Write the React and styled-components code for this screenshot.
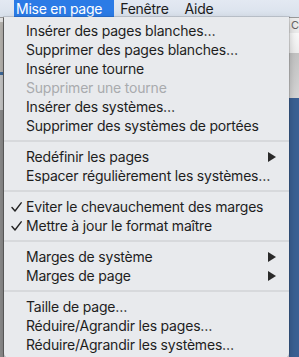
import React from "react";
import styled, { createGlobalStyle } from "styled-components";

const GlobalStyle = createGlobalStyle`
  html, body { margin: 0; padding: 0; background: #3c6294; }
  body { overflow: hidden; font-family: Inter, "Noto Sans", "Liberation Sans", sans-serif; -webkit-font-smoothing: antialiased; }
`;

const Screen = styled.div`
  position: relative;
  width: 299px;
  height: 357px;
  overflow: hidden;
  display: grid;
  grid-template-rows: 17px 1fr;
`;

const MenuBar = styled.div`
  display: flex;
  align-items: stretch;
  gap: 4px;
  padding-left: 14px;
  background: linear-gradient(#e3e9f2, #d9e1ec);
`;

const MenuTitle = styled.div`
  display: flex;
  align-items: center;
  padding: 0 ${(p) => (p.$active ? "12px" : "10px")} 0 2px;
  font-size: 14px;
  letter-spacing: -0.25px;
  color: ${(p) => (p.$active ? "#ffffff" : "#1c1c1c")};
  background: ${(p) => (p.$active ? "#2b7be6" : "transparent")};
`;

const Desktop = styled.div`
  display: grid;
  grid-template-columns: 4px 1fr 10px;
  border-top: 1px solid #9a9a9a;
`;

const LeftEdge = styled.div`
  background: linear-gradient(
    #e4e4e4 0px, #e4e4e4 4px,
    #b9b6b1 4px, #b9b6b1 54px,
    #3e6a9c 54px, #3e6a9c 57px,
    #c9c9c9 57px, #c9c9c9 92px,
    #8d8d8d 92px
  );
  border-right: 1px solid #6f6f6f;
`;

const Middle = styled.div`
  background: #e9ebee;
`;

const RightEdge = styled.div`
  display: grid;
  grid-template-rows: 15px 20px 45px 1fr;
`;

const ToolStrip = styled.div`
  background: #ececec;
  font-size: 11px;
  color: #666;
  padding-left: 2px;
  line-height: 15px;
`;

const WhiteStrip = styled.div`
  background: linear-gradient(#fafafa, #eeeeee);
`;

const GreyStrip = styled.div`
  background: linear-gradient(#c4c4c4, #d6d6d6);
`;

const BlueArea = styled.div`
  background: #3b6194;
`;

const Menu = styled.div`
  position: absolute;
  top: 17px;
  left: 4px;
  width: 285px;
  height: 341px;
  box-sizing: border-box;
  padding: 4px 0;
  background: #e8eaed;
  border-radius: 0 0 5px 5px;
  box-shadow: 0 0 0 1px rgba(0, 0, 0, 0.12), 0 4px 10px rgba(0, 0, 0, 0.25);
`;

const Item = styled.div`
  height: 19px;
  display: grid;
  grid-template-columns: 15px 1fr 20px;
  align-items: center;
  padding-left: 7px;
  padding-right: 13px;
  font-size: 14px;
  letter-spacing: -0.2px;
  line-height: 19px;
  white-space: nowrap;
  color: ${(p) => (p.$disabled ? "#a9abae" : "#1e1e1e")};
`;

const CheckCell = styled.span`
  display: flex;
  align-items: center;
  height: 19px;
`;

const Label = styled.span``;

const ArrowCell = styled.span`
  display: flex;
  justify-content: flex-end;
  align-items: center;
`;

const Separator = styled.div`
  height: 12px;
  display: flex;
  align-items: center;
  &::after {
    content: "";
    flex: 1;
    height: 2px;
    background: #d7d9dc;
  }
`;

const Check = () => (
  <svg width="11" height="10" viewBox="0 0 11 10">
    <path d="M1 5.5 L4 9 L10.2 0.8" fill="none" stroke="#222" strokeWidth="1.4" strokeLinecap="round" strokeLinejoin="round" />
  </svg>
);

const Arrow = () => (
  <svg width="8" height="10" viewBox="0 0 8 10">
    <path d="M0 0 L8 5 L0 10 Z" fill="#2a2a2a" />
  </svg>
);

const groups = [
  [
    { label: "Insérer des pages blanches…" },
    { label: "Supprimer des pages blanches…" },
    { label: "Insérer une tourne" },
    { label: "Supprimer une tourne", disabled: true },
    { label: "Insérer des systèmes…" },
    { label: "Supprimer des systèmes de portées" },
  ],
  [
    { label: "Redéfinir les pages", sub: true },
    { label: "Espacer régulièrement les systèmes…" },
  ],
  [
    { label: "Eviter le chevauchement des marges", checked: true },
    { label: "Mettre à jour le format maître", checked: true },
  ],
  [
    { label: "Marges de système", sub: true },
    { label: "Marges de page", sub: true },
  ],
  [
    { label: "Taille de page…" },
    { label: "Réduire/Agrandir les pages…" },
    { label: "Réduire/Agrandir les systèmes…" },
  ],
];

export default function App() {
  return (
    <>
      <GlobalStyle />
      <Screen>
        <MenuBar>
          <MenuTitle $active>Mise en page</MenuTitle>
          <MenuTitle>Fenêtre</MenuTitle>
          <MenuTitle>Aide</MenuTitle>
        </MenuBar>
        <Desktop>
          <LeftEdge />
          <Middle />
          <RightEdge>
            <ToolStrip>C</ToolStrip>
            <WhiteStrip />
            <GreyStrip />
            <BlueArea />
          </RightEdge>
        </Desktop>
        <Menu>
          {groups.map((g, gi) => (
            <React.Fragment key={gi}>
              {gi > 0 && <Separator />}
              {g.map((it) => (
                <Item key={it.label} $disabled={it.disabled}>
                  <CheckCell>{it.checked && <Check />}</CheckCell>
                  <Label>{it.label}</Label>
                  <ArrowCell>{it.sub && <Arrow />}</ArrowCell>
                </Item>
              ))}
            </React.Fragment>
          ))}
        </Menu>
      </Screen>
    </>
  );
}
